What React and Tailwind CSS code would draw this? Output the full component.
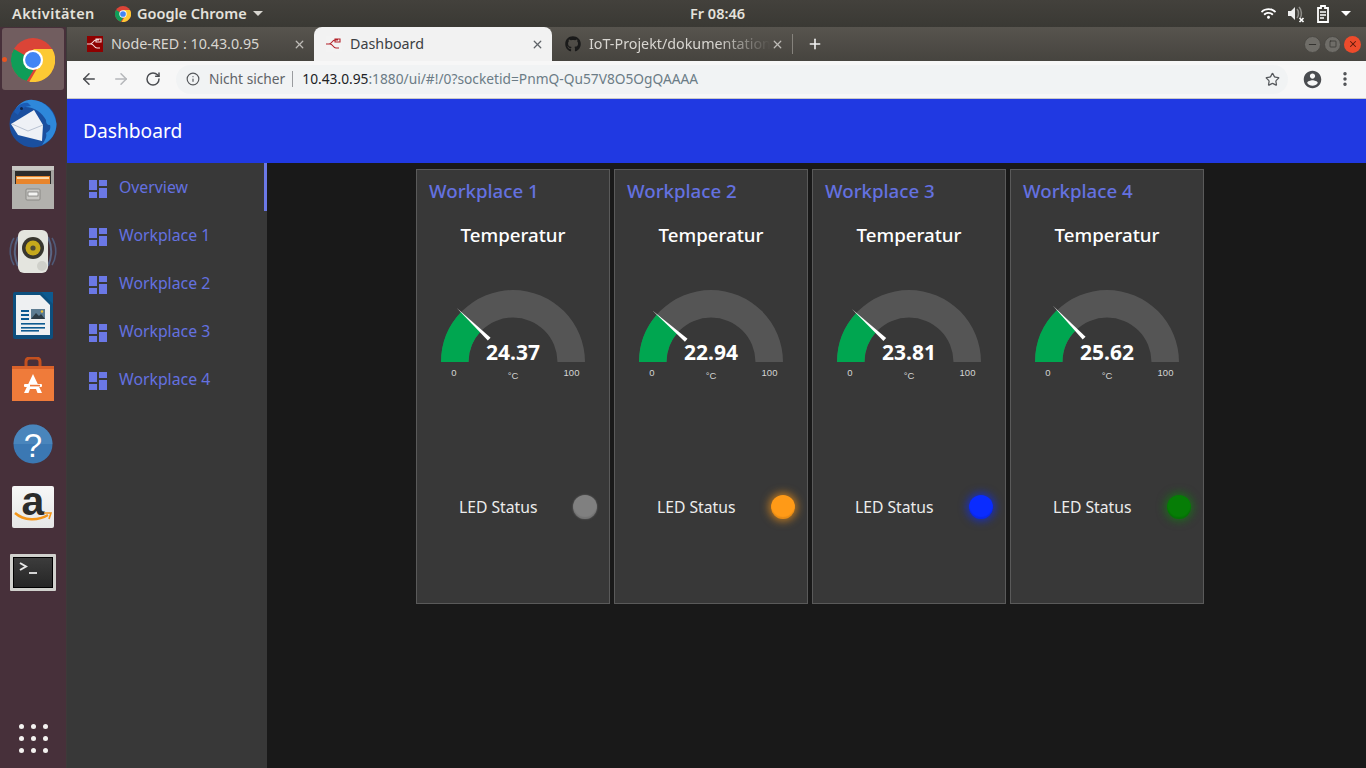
import React from 'react';
import { ArrowLeft, ArrowRight, RotateCw, Info, Star, X, Plus, Minus, Square, EllipsisVertical } from 'lucide-react';
import { FaGithub, FaWifi } from 'react-icons/fa';

const NAV_ITEMS = ['Overview', 'Workplace 1', 'Workplace 2', 'Workplace 3', 'Workplace 4'];

const WORKPLACES = [
  { name: 'Workplace 1', temp: 24.37, led: 'bg-[#808080] shadow-[0_0_2px_#6f6f6f,inset_0_-2px_1px_#00000018]' },
  { name: 'Workplace 2', temp: 22.94, led: 'bg-[#ff9a17] shadow-[0_0_9px_2px_#ff9a17aa,inset_0_-2px_1px_#00000018]' },
  { name: 'Workplace 3', temp: 23.81, led: 'bg-[#0a2cff] shadow-[0_0_9px_2px_#0a2cffaa,inset_0_-2px_1px_#00000018]' },
  { name: 'Workplace 4', temp: 25.62, led: 'bg-[#067d06] shadow-[0_0_9px_2px_#0a8a0a99,inset_0_-2px_1px_#00000018]' },
];

function ChromeIcon({ size }) {
  return (
    <svg width={size} height={size} viewBox="0 0 48 48">
      <circle cx="24" cy="24" r="24" fill="#db4437" />
      <path d="M24 24 L3.2 12 A24 24 0 0 0 17 47 L24 36 Z" fill="#0f9d58" />
      <path d="M24 12 H45 A24 24 0 0 1 20 47.7 L34 24 Z" fill="#fcc934" />
      <circle cx="24" cy="24" r="11" fill="#fff" />
      <circle cx="24" cy="24" r="8.6" fill="#4285f4" />
    </svg>
  );
}

function NodeRedIcon({ light }) {
  const stroke = light ? '#b3222a' : '#f4dcdc';
  return (
    <svg width="16" height="16" viewBox="0 0 16 16" className={light ? 'bg-[#f3f3f3]' : 'bg-[#8f0000]'}>
      <path d="M0 8 H3 C6 8 6 4 9 4 H12 M4 8 C7 8 7 12 10 12 H13 M9 3 H14 V6 H9 Z" fill="none" stroke={stroke} strokeWidth="1.1" />
    </svg>
  );
}

function Thunderbird() {
  return (
    <svg width="48" height="50" viewBox="0 0 48 50">
      <circle cx="24" cy="26" r="23.5" fill="#1a4f9f" />
      <path d="M6 13 C9 5 17 1 24 2 C36 3 46 13 47.5 26 C47.5 35 42 43 33 47 C37 41 38 38 37 35 C41 33 42 30 41 27 C38 27 37 25 37 22 C33 14 24 8 14 9 C11 9 8 11 6 13Z" fill="#2e88da" />
      <path d="M5 14 C8 8 13 4 19 5 L22 8 C15 8 11 12 9 17Z" fill="#1b5cb6" />
      <path d="M2 26 L25 12 L34 27 L33 43 L9 37 Z" fill="#eef1f6" />
      <path d="M3 26 L19 33 L34 27" fill="none" stroke="#b8c2d2" strokeWidth="1" />
      <circle cx="12.5" cy="10.5" r="1.5" fill="#0f2347" />
    </svg>
  );
}

function Files() {
  return (
    <svg width="42" height="43" viewBox="0 0 42 43">
      <rect width="42" height="43" rx="2" fill="#a5a4a0" />
      <rect width="42" height="4" fill="#c9c8c4" />
      <rect x="3" y="5" width="36" height="13" fill="#2c2b2a" />
      <rect x="4" y="10" width="34" height="8" fill="#e8852c" />
      <rect x="5" y="11" width="32" height="2" fill="#fbd9a8" />
      <rect y="18" width="42" height="25" fill="#b2b1ad" />
      <rect x="14" y="23" width="14" height="11" rx="1" fill="#c9c8c4" stroke="#8a8985" />
      <rect x="16" y="26" width="10" height="4" fill="#f3f3f1" stroke="#5f5e5a" strokeWidth="0.6" />
    </svg>
  );
}

function Rhythmbox() {
  return (
    <svg width="48" height="43" viewBox="0 0 48 43">
      <path d="M5 8 C0 16 0 27 5 35 M43 8 C48 16 48 27 43 35" fill="none" stroke="#4f5a78" strokeWidth="1.6" />
      <path d="M9 7 C5 16 5 27 9 36 M39 7 C43 16 43 27 39 36" fill="none" stroke="#5b6785" strokeWidth="2" />
      <rect x="9" y="0" width="30" height="43" rx="6" fill="#e4e5df" />
      <circle cx="24" cy="18" r="11" fill="#38362f" />
      <circle cx="24" cy="18" r="7.5" fill="#c6a91c" />
      <circle cx="24" cy="18" r="2.6" fill="#4d4a36" />
      <circle cx="33" cy="36" r="5" fill="#cfd0ca" />
    </svg>
  );
}

function Writer() {
  return (
    <svg width="40" height="47" viewBox="0 0 40 47">
      <path d="M2 0 H40 V45 Q40 47 38 47 H2 Q0 47 0 45 V2 Q0 0 2 0Z" fill="#0d4f7e" />
      <path d="M3 3 H27 L37 13 V43 H3 Z" fill="#eef0f2" />
      <path d="M28 0 H40 V12 Z" fill="#0d5a90" />
      <rect x="8" y="18" width="8" height="2" fill="#0d5a90" />
      <rect x="8" y="22" width="8" height="2" fill="#0d5a90" />
      <rect x="8" y="26" width="8" height="2" fill="#0d5a90" />
      <rect x="8" y="31" width="24" height="1.6" fill="#0d5a90" />
      <rect x="8" y="35" width="24" height="1.6" fill="#0d5a90" />
      <rect x="8" y="38" width="18" height="1.6" fill="#0d5a90" />
      <rect x="18" y="17" width="14" height="10" fill="#5d7c92" />
      <path d="M18 27 L23 21 L26 24 L28 22 L32 27Z" fill="#2d3b45" />
      <circle cx="29" cy="19.5" r="1.2" fill="#f2c230" />
    </svg>
  );
}

function SoftwareCenter() {
  return (
    <svg width="42" height="44" viewBox="0 0 42 44">
      <path d="M14 13 V5 Q14 1 18 1 H24 Q28 1 28 5 V13" fill="none" stroke="#c3501f" strokeWidth="3" />
      <path d="M0 9 H42 V44 H0 Z" fill="#ef7b3a" />
      <path d="M0 9 H42 V12 H0 Z" fill="#d9622a" />
      <path d="M21 17 L30 36 H25.5 L24 32 H18 L16.5 36 H12 Z" fill="#fff" />
      <rect x="12" y="27" width="18" height="3" rx="1" fill="#fff" />
      <rect x="18" y="27.8" width="10" height="1.6" fill="#ef7b3a" />
    </svg>
  );
}

function Help() {
  return (
    <svg width="40" height="40" viewBox="0 0 40 40">
      <circle cx="20" cy="20" r="19.5" fill="#3b78b3" />
      <path d="M20 .5 A19.5 19.5 0 0 1 39.5 20 H.5 A19.5 19.5 0 0 1 20 .5Z" fill="#5a94c8" opacity=".45" />
      <text x="20" y="33" textAnchor="middle" fontFamily="Liberation Sans, sans-serif" fontSize="33" fill="#fff">?</text>
    </svg>
  );
}

function Amazon() {
  return (
    <svg width="42" height="42" viewBox="0 0 42 42" className="rounded-[2px] bg-gradient-to-b from-[#f7f7f7] to-[#e6e6e6]">
      <text x="21" y="29" textAnchor="middle" fontFamily="Liberation Sans, sans-serif" fontSize="41" fontWeight="700" fill="#2b2b2b">a</text>
      <path d="M3 27 C12 35 26 35 36 29" fill="none" stroke="#f39419" strokeWidth="2.4" />
      <path d="M32 27 L39 27 L37 33" fill="none" stroke="#f39419" strokeWidth="1.6" />
    </svg>
  );
}

function Terminal() {
  return (
    <div className="w-[46px] h-[37px] border-[3px] border-[#d0d0cc] bg-[#111] flex items-start rounded-[1px]">
      <div className="w-full h-full bg-gradient-to-b from-[#3c3c3c] to-[#262626] border border-black pl-[5px] pt-[3px]">
        <svg width="22" height="16" viewBox="0 0 22 16">
          <path d="M1 2 L7 5.5 L1 9" fill="none" stroke="#e8e8e8" strokeWidth="2" />
          <path d="M10 12 H18" stroke="#e8e8e8" strokeWidth="1.8" />
        </svg>
      </div>
    </div>
  );
}

function Launcher() {
  return (
    <aside className="w-[67px] shrink-0 bg-[#47303a] border-r border-[#3d3a39] flex flex-col items-center relative">
      <div className="absolute left-[2px] top-[1px] w-[62px] h-[62px] rounded-[3px] bg-[#715d5f]" />
      <span className="absolute left-[2px] top-[30px] w-[5px] h-[5px] rounded-full bg-[#e95420]" />
      <div className="h-[65px] flex items-center relative"><ChromeIcon size={44} /></div>
      <div className="h-[62px] flex items-center"><Thunderbird /></div>
      <div className="h-[66px] flex items-center"><Files /></div>
      <div className="h-[62px] flex items-center"><Rhythmbox /></div>
      <div className="h-[66px] flex items-center"><Writer /></div>
      <div className="h-[62px] flex items-center"><SoftwareCenter /></div>
      <div className="h-[68px] flex items-center"><Help /></div>
      <div className="h-[58px] flex items-center"><Amazon /></div>
      <div className="h-[72px] flex items-center"><Terminal /></div>
      <div className="mt-auto mb-[15px] grid grid-cols-3 gap-[7px]">
        {[...Array(9)].map((_, i) => <span key={i} className="w-[5px] h-[5px] rounded-full bg-[#f4f2f0]" />)}
      </div>
    </aside>
  );
}

function TopBar() {
  return (
    <header className="h-[27px] shrink-0 bg-gradient-to-b from-[#43413c] to-[#3a3934] text-[#e4e2dc] flex items-center font-['Noto_Sans',sans-serif] text-[14.5px] font-semibold relative">
      <span className="ml-[12px] w-[103px] tracking-[0.4px]">Aktivitäten</span>
      <ChromeIcon size={16} />
      <span className="ml-[6px]">Google Chrome</span>
      <span className="ml-[6px] w-0 h-0 border-x-[5px] border-x-transparent border-t-[5px] border-t-[#d8d6d0]" />
      <span className="absolute left-[690px] top-[3px]">Fr 08:46</span>
      <div className="ml-auto flex items-center mr-[15px] text-white">
        <FaWifi size={15} />
        <svg className="ml-[11px]" width="18" height="18" viewBox="0 0 18 18">
          <path d="M1 6 H4 L8 2 V15 L4 11 H1 Z" fill="#eeeeee" />
          <path d="M10 4 C12 6 12 11 10 13 M12 2 C15 5 15 11 13 13" fill="none" stroke="#8d8c88" strokeWidth="1.6" />
          <path d="M12.5 13 L16.5 17 M16.5 13 L12.5 17" stroke="#fff" strokeWidth="1.7" />
        </svg>
        <svg className="ml-[11px]" width="14" height="18" viewBox="0 0 14 18">
          <path d="M2 3 H5 V1 H9 V3 H12 V17 H2 Z" fill="none" stroke="#fff" strokeWidth="1.8" />
          <path d="M4 7 H10 M4 10 H10 M4 13 H8" stroke="#fff" strokeWidth="1.4" />
        </svg>
        <span className="ml-[11px] w-0 h-0 border-x-[5px] border-x-transparent border-t-[5px] border-t-white" />
      </div>
    </header>
  );
}

function Tab({ active, icon, title, fade, pad, w }) {
  return (
    <div className={`h-[34px] flex items-center pr-[8px] shrink-0 ${pad} ${w} ${active ? 'bg-[#f2f2f2] rounded-t-[8px] text-[#3c4043]' : 'text-[#d8d6d1]'}`}>
      {icon}
      <span className={`ml-[8px] text-[14.3px] whitespace-nowrap overflow-hidden flex-1 ${fade ? 'mask-r-from-70%' : ''}`}>{title}</span>
      <X size={13} strokeWidth={2.4} className={active ? 'text-[#5f6368]' : 'text-[#bdbbb6]'} />
    </div>
  );
}

function TabStrip() {
  return (
    <div className="h-[34px] shrink-0 bg-gradient-to-b from-[#57544e] to-[#46443f] flex items-center font-['Noto_Sans',sans-serif]">
      <Tab w="w-[247px]" pad="pl-[20px]" icon={<NodeRedIcon />} title="Node-RED : 10.43.0.95" />
      <Tab active w="w-[238px]" pad="pl-[12px]" icon={<NodeRedIcon light />} title="Dashboard" />
      <Tab w="w-[240px]" pad="pl-[13px]" fade icon={<FaGithub size={16} className="text-[#1a1a1a]" />} title="IoT-Projekt/dokumentation" />
      <span className="w-px h-[20px] bg-[#85827c]" />
      <Plus size={16} strokeWidth={2.4} className="ml-[14px] text-[#f2f2f2]" />
      <div className="ml-auto mr-[5px] flex items-center gap-[3px]">
        <span className="w-[17px] h-[17px] rounded-full bg-[#6f6d68] border border-[#4a4843] flex items-center justify-center"><Minus size={11} className="text-[#2f2e2b]" /></span>
        <span className="w-[17px] h-[17px] rounded-full bg-[#6f6d68] border border-[#4a4843] flex items-center justify-center"><Square size={8} className="text-[#2f2e2b]" /></span>
        <span className="w-[17px] h-[17px] rounded-full bg-[#ee4b2b] flex items-center justify-center"><X size={10} strokeWidth={2.5} className="text-[#5c1a0c]" /></span>
      </div>
    </div>
  );
}

function AddressBar() {
  return (
    <div className="h-[38px] shrink-0 bg-[#f7f7f7] border-b border-[#c8c8c8] flex items-center font-['Noto_Sans',sans-serif] text-[#5f6368] pb-[1px]">
      <ArrowLeft size={18} strokeWidth={2} className="ml-[13px] text-[#4a4c50]" />
      <ArrowRight size={18} strokeWidth={2} className="ml-[14px] text-[#b5b7ba]" />
      <RotateCw size={16} strokeWidth={2.2} className="ml-[15px] text-[#4a4c50]" />
      <div className="ml-[15px] flex-1 h-[29px] bg-[#f1f3f4] rounded-full flex items-center pl-[10px]">
        <Info size={14} strokeWidth={2} className="text-[#55585c]" />
        <span className="ml-[9px] text-[13.75px] text-[#5f6368]">Nicht sicher</span>
        <span className="ml-[7px] w-px h-[16px] bg-[#9a9c9f]" />
        <span className="ml-[9px] text-[13.75px] text-[#202124]">10.43.0.95<span className="text-[#6b7c86]">:1880/ui/#!/0?socketid=PnmQ-Qu57V8O5OgQAAAA</span></span>
        <Star size={15} strokeWidth={2} className="ml-auto mr-[8px] text-[#55585c]" />
      </div>
      <svg className="ml-[14px]" width="21" height="21" viewBox="0 0 24 24" fill="#4a4c50">
        <path d="M12 2C6.48 2 2 6.48 2 12s4.48 10 10 10 10-4.48 10-10S17.52 2 12 2zm0 3c1.66 0 3 1.34 3 3s-1.34 3-3 3-3-1.34-3-3 1.34-3 3-3zm0 14.2c-2.5 0-4.71-1.28-6-3.22.03-1.99 4-3.08 6-3.08 1.99 0 5.97 1.09 6 3.08-1.29 1.94-3.5 3.22-6 3.22z" />
      </svg>
      <EllipsisVertical size={18} strokeWidth={2.6} className="ml-[13px] mr-[12px] text-[#4a4c50]" />
    </div>
  );
}

function DashIcon() {
  return (
    <svg width="18" height="18" viewBox="0 0 18 18" fill="#6b78e6" className="mt-[3px]">
      <path d="M0 0h8v10H0zM0 12h8v6H0zM10 0h8v6h-8zM10 8h8v10h-8z" />
    </svg>
  );
}

function Sidebar() {
  return (
    <nav className="w-[200px] shrink-0 bg-[#383838] flex flex-col">
      {NAV_ITEMS.map((item, i) => (
        <div key={item} className={`h-[48px] flex items-center pl-[22px] text-[#6471e0] text-[15.8px] ${i === 0 ? 'border-r-[3px] border-[#6b78e6]' : ''}`}>
          <DashIcon />
          <span className="ml-[12px] mt-[2px]">{item}</span>
        </div>
      ))}
    </nav>
  );
}

function Gauge({ value }) {
  const R = 72;
  const r = 44.5;
  const cx = 80;
  const cy = 74;
  const a = Math.PI * (1 - value / 100);
  const cos = Math.cos(a);
  const sin = Math.sin(a);
  const pt = (rad) => `${(cx + rad * cos).toFixed(2)} ${(cy - rad * sin).toFixed(2)}`;
  // needle tapers from a wide base down to a point just past the arc
  const base = (off) => `${(cx + 33 * cos + off * sin).toFixed(2)} ${(cy - 33 * sin + off * cos).toFixed(2)}`;
  return (
    <svg width="160" height="100" viewBox="0 0 160 100" className="block">
      <path d={`M${cx - R} ${cy} A${R} ${R} 0 0 1 ${cx + R} ${cy} H${cx + r} A${r} ${r} 0 0 0 ${cx - r} ${cy} Z`} fill="#555555" />
      <path d={`M${cx - R} ${cy} A${R} ${R} 0 0 1 ${pt(R)} L${pt(r)} A${r} ${r} 0 0 0 ${cx - r} ${cy} Z`} fill="#00a650" />
      <path d={`M${base(2)} L${base(-2)} L${pt(78)} Z`} fill="#fff" />
      <text x={cx} y={cy - 2} textAnchor="middle" fill="#fff" fontSize="21" fontWeight="700" fontFamily="Noto Sans, sans-serif">{value.toFixed(2)}</text>
      <text x={cx - 59} y={cy + 14} textAnchor="middle" fill="#d4d4d4" fontSize="9.5" fontFamily="Liberation Sans, sans-serif">0</text>
      <text x={cx + 58.5} y={cy + 14} textAnchor="middle" fill="#d4d4d4" fontSize="9.5" fontFamily="Liberation Sans, sans-serif">100</text>
      <text x={cx} y={cy + 17} textAnchor="middle" fill="#d4d4d4" fontSize="9.5" fontFamily="Liberation Sans, sans-serif">°C</text>
    </svg>
  );
}

function Card({ name, temp, led }) {
  return (
    <section className="w-[194px] h-[435px] bg-[#383838] border border-[#5a5a5a] flex flex-col">
      <h2 className="mt-[9px] ml-[12px] text-[18.7px] leading-[24px] text-[#6471e0] font-medium">{name}</h2>
      <div className="mt-[20px] text-center text-[18.7px] leading-[24px] text-white font-medium">Temperatur</div>
      <div className="mt-[41px] flex justify-center"><Gauge value={temp} /></div>
      <div className="mt-[106px] h-[28px] flex items-center pl-[42px]">
        <span className="text-[#ececec] text-[15.7px]">LED Status</span>
        <span className={`ml-auto mr-[12px] mb-[2px] w-[24px] h-[24px] rounded-full ${led}`} />
      </div>
    </section>
  );
}

export default function App() {
  return (
    <div className="w-[1366px] h-[768px] overflow-hidden flex flex-col bg-[#47303a] font-['Noto_Sans',sans-serif]">
      <TopBar />
      <div className="flex flex-1 min-h-0">
        <Launcher />
        <div className="flex-1 min-w-0 flex flex-col">
          <TabStrip />
          <AddressBar />
          <div className="h-[64px] shrink-0 bg-[#2039e2] flex items-center pl-[16px] text-white text-[19.2px]">Dashboard</div>
          <div className="flex flex-1 min-h-0 bg-[#191919]">
            <Sidebar />
            <main className="flex-1 flex items-start gap-[4px] pl-[149px] pt-[6px]">
              {WORKPLACES.map((w) => <Card key={w.name} {...w} />)}
            </main>
          </div>
        </div>
      </div>
    </div>
  );
}
